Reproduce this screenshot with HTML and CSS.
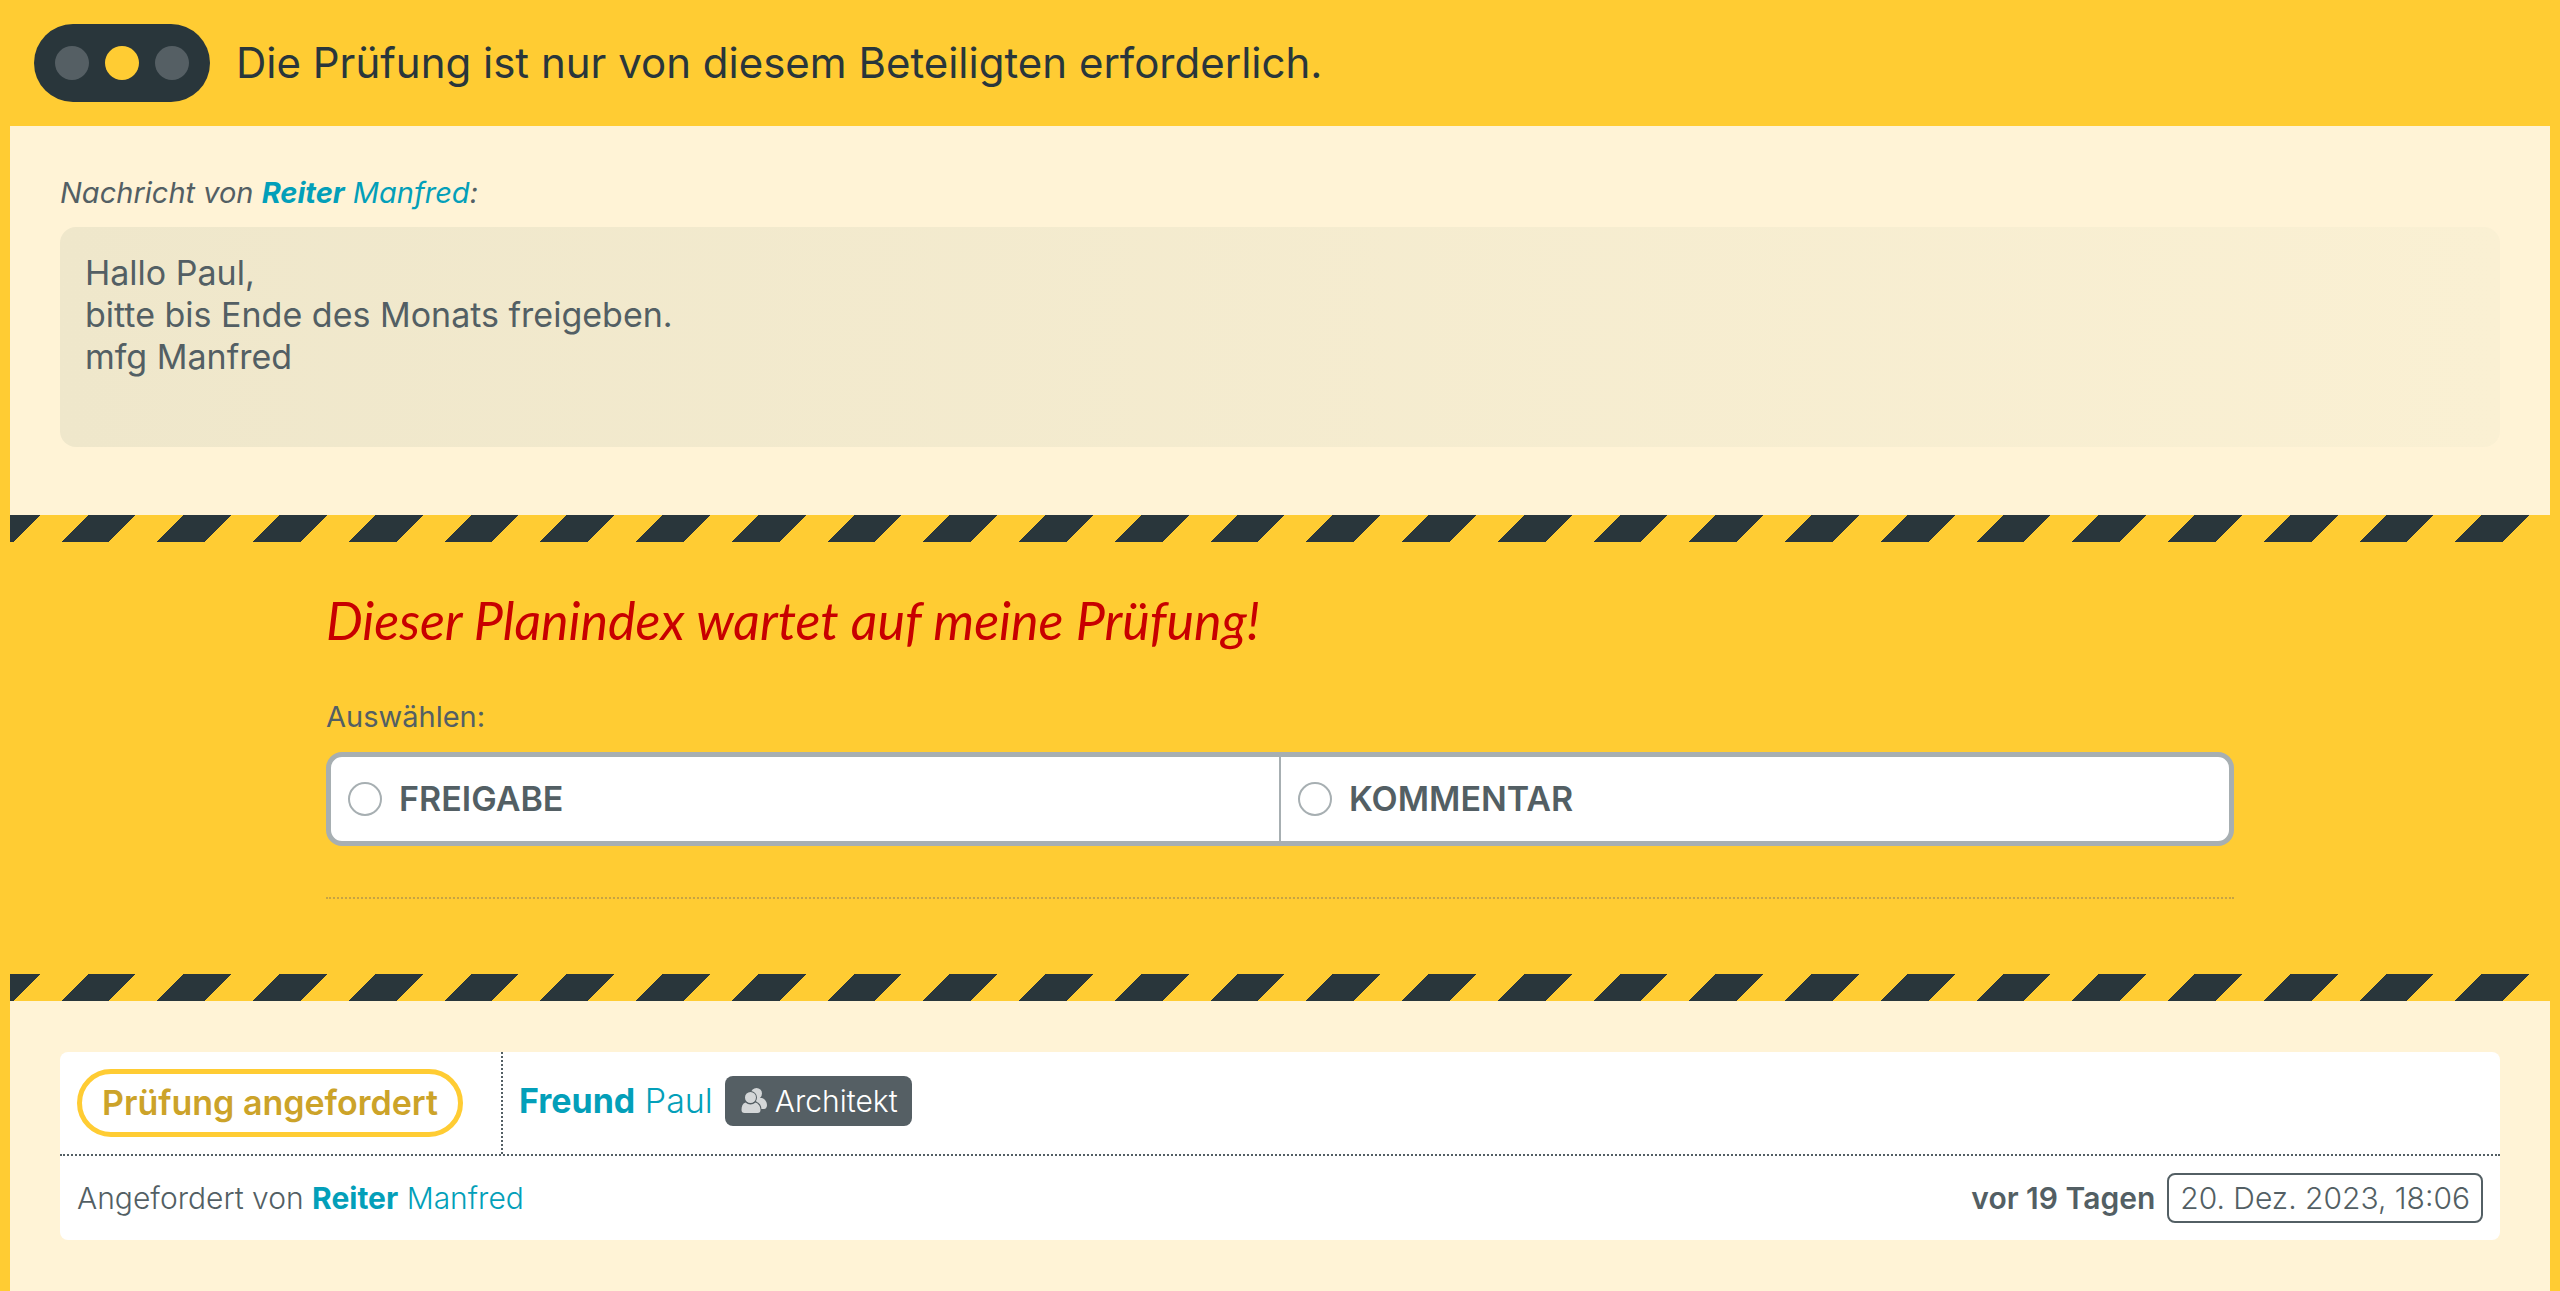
FILE: index.html
```html
<!DOCTYPE html>
<html lang="de">
<head>
  <meta charset="UTF-8" />
  <meta name="viewport" content="width=device-width, initial-scale=1.0"/>
  <title>Planprüfung</title>
  <link rel="stylesheet" href="styles.css">
</head>
<body>
  <header class="status">
    <div class="traffic-light">
      <span class="light"></span>
      <span class="light active"></span>
      <span class="light"></span>
    </div>
    <h1>Die Prüfung ist nur von diesem Beteiligten erforderlich.</h1>
  </header>

  <main>
    <section class="message">
      <p class="message-from">Nachricht von <a href="#"><strong>Reiter</strong> Manfred</a>:</p>
      <div class="message-text">
        Hallo Paul,<br>
        bitte bis Ende des Monats freigeben.<br>
        mfg Manfred
      </div>
    </section>

    <div class="stripes"></div>

    <form class="review">
      <h2>Dieser Planindex wartet auf meine Prüfung!</h2>
      <p class="choose" id="chooseLabel">Auswählen:</p>
      <div class="options" role="radiogroup" aria-labelledby="chooseLabel">
        <label class="option"><input type="radio" name="result" value="freigabe">FREIGABE</label>
        <label class="option"><input type="radio" name="result" value="kommentar">KOMMENTAR</label>
      </div>
      <hr>
    </form>

    <div class="stripes"></div>

    <section class="requests">
      <article class="card">
        <div class="card-top">
          <div class="card-state">
            <span class="state">Prüfung angefordert</span>
          </div>
          <div class="card-person">
            <a href="#"><strong>Freund</strong> Paul</a>
            <span class="role">
              <svg class="role-icon" viewBox="0 0 26 26" aria-hidden="true">
                <circle cx="15.500" cy="5.500" r="5.500"/>
                <path d="M14 10h7c3 1 5 4 5 7 0 2-1 4-3 4h-5z"/>
                <g class="front">
                  <circle cx="9.500" cy="9.500" r="5.500"/>
                  <path d="M4.500 14.500c3 2.500 7 2.500 10 0 3 1 5 4 5 7.500 0 2-1 3-3 3h-13c-2 0-3-1-3-3 0-3.500 1-6.500 4-7.500z"/>
                </g>
              </svg>
              Architekt
            </span>
          </div>
        </div>
        <div class="card-bottom">
          <p>Angefordert von <a href="#"><strong>Reiter</strong> Manfred</a></p>
          <p class="when">
            <strong>vor 19 Tagen</strong>
            <time datetime="2023-12-20T18:06">20. Dez. 2023, 18:06</time>
          </p>
        </div>
      </article>
    </section>
  </main>
</body>
</html>
```
FILE: styles.css
```css
* {
  box-sizing: border-box;
}

html {
  background: #ffcc33;
}

body {
  font-family: Inter, 'Liberation Sans', sans-serif;
  font-size: 30px;
  line-height: 42px;
  margin: 0;
  min-height: 100vh;
  padding: 0 10px;
  color: #535f64;
  display: flex;
  flex-direction: column;
}

h1, h2, p {
  margin: 0;
  font-weight: inherit;
}

a {
  color: #039fb9;
  text-decoration: none;
}

strong {
  font-weight: 700;
}

main {
  flex: 1;
  display: flex;
  flex-direction: column;
}

/* header */
.status {
  display: flex;
  align-items: center;
  gap: 26px;
  padding: 24px;
  color: #29363b;
}

.status h1 {
  font-size: 42px;
  line-height: 54px;
}

.traffic-light {
  display: flex;
  flex-shrink: 0;
  gap: 16px;
  padding: 22px 21px;
  border-radius: 40px;
  background: #29363b;
}

.light {
  width: 34px;
  height: 34px;
  border-radius: 50%;
  background: #555f64;
}

.light.active {
  background: #ffcc33;
}

/* message */
.message {
  padding: 46px 50px 68px;
  background: #fff3d6;
}

.message-from {
  font-size: 29px;
  font-style: italic;
  margin-bottom: 13px;
}

.message-text {
  min-height: 220px;
  padding: 25px;
  border-radius: 16px;
  background: linear-gradient(to right, #efe7cb, #faf0d3);
  font-size: 34px;
}

.stripes {
  height: 27px;
  background: repeating-linear-gradient(135deg,
    #29363b 0, #29363b 1.17%,
    #ffcc33 1.17%, #ffcc33 3.04%,
    #29363b 3.04%, #29363b 3.73%);
}

/* review form */
.review {
  width: calc(100% - 100px);
  max-width: 1908px;
  margin: 0 auto;
  padding: 47px 0 75px;
}

.review h2 {
  font-family: Lato, 'Open Sans', sans-serif;
  font-style: italic;
  font-size: 52px;
  line-height: 62px;
  color: #c80000;
}

.choose {
  margin: 45px 0 14px;
  font-size: 29px;
}

.options {
  display: flex;
  overflow: hidden;
  border: 5px solid #a7afb2;
  border-radius: 16px;
  background: white;
}

.option {
  flex: 1;
  display: flex;
  align-items: center;
  gap: 17px;
  padding: 21px 17px;
  font-size: 34px;
  font-weight: 600;
  cursor: pointer;
}

.option + .option {
  border-left: 2px solid #a7afb2;
}

.option input {
  appearance: none;
  width: 34px;
  height: 34px;
  margin: 0;
  border: 2px solid #a7afb2;
  border-radius: 50%;
  background: white;
}

.option input:checked {
  border-width: 10px;
  border-color: #039fb9;
}

.review hr {
  margin: 51px 0 0;
  border: none;
  border-top: 2px dotted #c7a443;
}

/* requests */
.requests {
  flex: 1;
  padding: 51px 50px;
  background: #fff3d6;
}

.card {
  border-radius: 8px;
  background: white;
  font-weight: 300;
}

.card-top {
  display: flex;
  border-bottom: 2px dotted #535f64;
}

.card-state {
  padding: 17px 38px 17px 17px;
  border-right: 2px dotted #535f64;
}

.state {
  display: block;
  padding: 8px 20px;
  border: 5px solid #ffcc33;
  border-radius: 35px;
  color: #cca329;
  font-size: 34px;
  font-weight: 600;
}

.card-person {
  display: flex;
  align-items: center;
  gap: 12px;
  padding: 0 16px 4px;
  font-size: 34px;
}

.role {
  display: flex;
  align-items: center;
  gap: 8px;
  padding: 4px 14px 4px 16px;
  border-radius: 8px;
  background: #555f64;
  color: white;
  font-size: 30px;
}

.role-icon {
  width: 26px;
  height: 26px;
  fill: #d4d7d8;
}

.role-icon .front {
  stroke: #555f64;
  stroke-width: 2px;
  paint-order: stroke;
}

.card-bottom {
  display: flex;
  align-items: center;
  justify-content: space-between;
  padding: 17px;
}

.when {
  display: flex;
  align-items: center;
  gap: 12px;
}

.when strong {
  font-weight: 600;
}

.when time {
  padding: 2px 11px;
  border: 2px solid #535f64;
  border-radius: 8px;
}
```
